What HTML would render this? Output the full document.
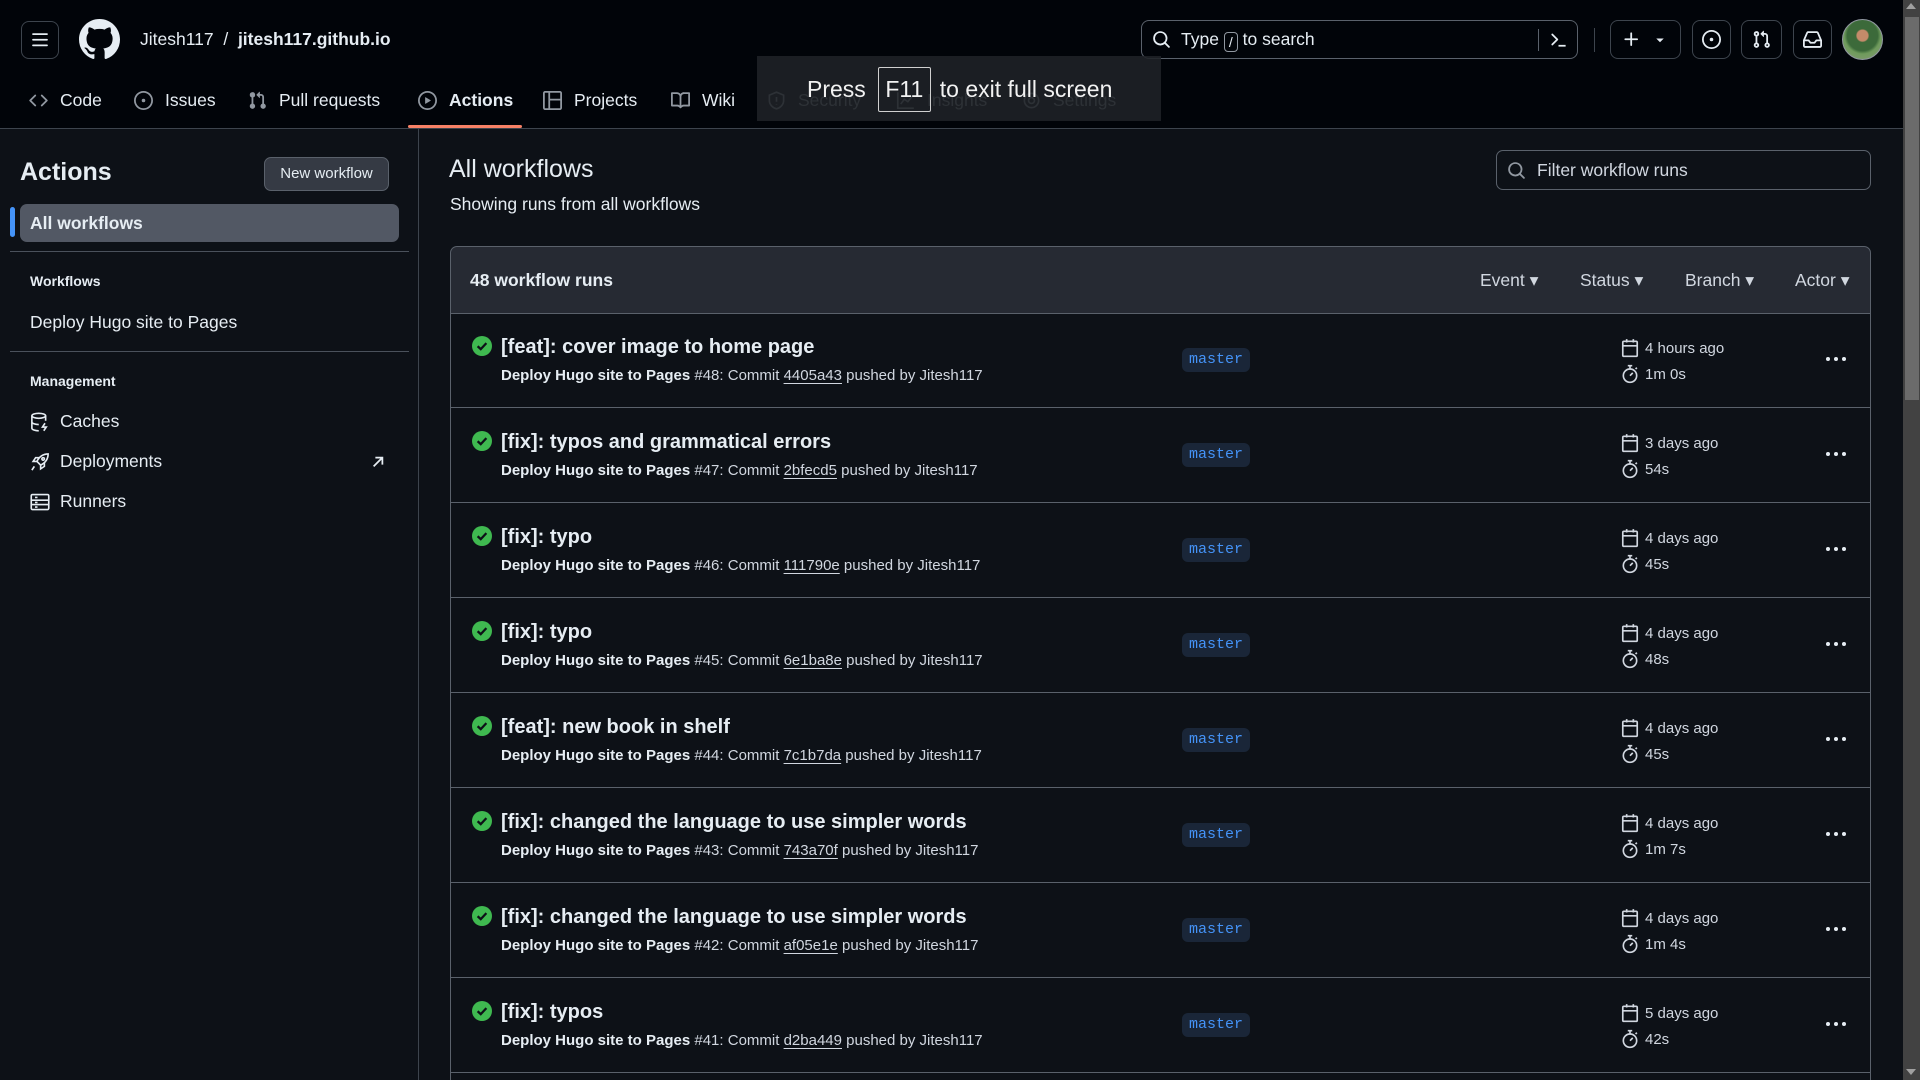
<!DOCTYPE html>
<html><head><meta charset="utf-8"><style>
*{box-sizing:border-box;margin:0;padding:0}
html,body{width:1920px;height:1080px;overflow:hidden}
body{background:#0d1117;font-family:"Liberation Sans",sans-serif;color:#e6edf3;font-size:17px}
#wrap{position:relative;width:1920px;height:1080px;overflow:hidden}
.a{position:absolute}
svg{display:block}
.hdr{left:0;top:0;width:1903px;height:129px;background:#010409;border-bottom:1px solid #3d444d}
.btn{border:1px solid #3d444d;border-radius:8px}
.tab{top:88px;height:24px;display:flex;align-items:center;font-size:17.5px;color:#e6edf3;white-space:nowrap}
.tab svg{margin-right:12px}
.sb{left:0;top:129px;width:419px;height:951px;border-right:1px solid #3d444d}
.row{left:450px;width:1421px;height:95px;border-bottom:1px solid #5a616b;border-left:1px solid #5a616b;border-right:1px solid #5a616b}
.t{left:50px;top:23px;font-size:20px;font-weight:bold;white-space:nowrap}
.s{left:50px;top:54px;font-size:15px;white-space:nowrap;color:#d1d7e0}
.s b{color:#e6edf3}
.s u{text-underline-offset:3px}
.chk{left:21px;top:23px}
.badge{left:731px;top:35px;height:24px;padding:0 7px;background:#1a2638;border-radius:6px;color:#4493f8;font-family:"Liberation Mono",monospace;font-size:15px;line-height:24px}
.tm{left:1170px;font-size:15px;color:#d1d7e0;display:flex;align-items:center;white-space:nowrap}
.tm svg{margin-right:6px}
.dots{left:1374px;top:43px}
</style></head><body><div id="wrap">
<div class="a hdr"></div>
<div class="a btn" style="left:21px;top:21px;width:38px;height:38px;display:flex;align-items:center;justify-content:center"><svg width="18" height="18" viewBox="0 0 16 16" fill="#e6edf3"><path d="M1 2.75A.75.75 0 0 1 1.750 2h12.5a.75.75 0 0 1 0 1.5H1.75A.75.75 0 0 1 1 2.75Zm0 5A.75.75 0 0 1 1.75 7h12.5a.75.75 0 0 1 0 1.5H1.75A.75.75 0 0 1 1 7.75ZM1.75 12h12.5a.75.75 0 0 1 0 1.5H1.75a.75.75 0 0 1 0-1.5Z"/></svg></div>
<svg class="a" style="left:79px;top:19px" width="41" height="41" viewBox="0 0 16 16" fill="#e6edf3"><path d="M8 0c4.42 0 8 3.58 8 8a8.013 8.013 0 0 1-5.45 7.59c-.4.08-.55-.17-.55-.38 0-.27.01-1.130.01-2.2 0-.75-.25-1.230-.54-1.48 1.780-.2 3.650-.88 3.650-3.950 0-.88-.31-1.590-.82-2.150.08-.2.36-1.020-.08-2.120 0 0-.67-.22-2.200.82-.64-.18-1.320-.27-2-.27-.68 0-1.360.09-2 .27-1.530-1.030-2.200-.82-2.200-.82-.44 1.100-.16 1.920-.08 2.120-.51.56-.82 1.280-.82 2.150 0 3.060 1.860 3.750 3.640 3.950-.23.2-.44.55-.51 1.070-.46.21-1.610.55-2.330-.66-.15-.24-.6-.83-1.230-.82-.67.01-.27.38.01.53.34.19.73.9.82 1.130.16.45.68 1.310 2.690.94 0 .67.01 1.3.01 1.490 0 .21-.15.45-.55.38A7.995 7.995 0 0 1 0 8c0-4.420 3.580-8 8-8Z"/></svg>
<div class="a" style="left:140px;top:29px;font-size:17.5px;white-space:nowrap">Jitesh117 &nbsp;/&nbsp; <b>jitesh117.github.io</b></div>

<div class="a btn" style="left:1141px;top:20px;width:437px;height:39px;border-color:#5a616b"></div>
<svg class="a" style="left:1152px;top:30px" width="19" height="19" viewBox="0 0 16 16" fill="#e6edf3"><path d="M10.68 11.74a6 6 0 0 1-7.922-8.982 6 6 0 0 1 8.982 7.922l3.04 3.04a.749.749 0 1 1-1.06 1.06ZM11.5 7a4.499 4.499 0 1 0-8.997 0A4.499 4.499 0 0 0 11.5 7Z"/></svg>
<div class="a" style="left:1181px;top:29px;font-size:17.5px;white-space:nowrap">Type <span style="display:inline-block;border:1px solid #9198a1;border-radius:4px;width:14px;height:20px;font-size:14px;text-align:center;line-height:18px;vertical-align:-2px">/</span> to search</div>
<div class="a" style="left:1538px;top:29px;width:1px;height:22px;background:#5a616b"></div>
<svg class="a" style="left:1549px;top:30px" width="19" height="19" viewBox="0 0 16 16" fill="#e6edf3"><path d="M2.22 3.22a.75.75 0 0 1 1.06 0l4.25 4.25a.75.75 0 0 1 0 1.06l-4.25 4.25a.75.75 0 0 1-1.06-1.06L5.94 8 2.22 4.28a.75.75 0 0 1 0-1.06ZM8 12.5h6v1.5H8Z"/></svg>
<div class="a" style="left:1594px;top:28px;width:1px;height:24px;background:#3d444d"></div>
<div class="a btn" style="left:1610px;top:20px;width:71px;height:39px"></div>
<svg class="a" style="left:1622px;top:30px" width="19" height="19" viewBox="0 0 16 16" fill="#e6edf3"><path d="M7.75 2a.75.75 0 0 1 .75.75V7h4.25a.75.75 0 0 1 0 1.5H8.5v4.25a.75.75 0 0 1-1.5 0V8.5H2.75a.75.75 0 0 1 0-1.5H7V2.75A.75.75 0 0 1 7.75 2Z"/></svg>
<svg class="a" style="left:1654px;top:34px" width="12" height="12" viewBox="0 0 16 16" fill="#e6edf3"><path d="m3 6 5 5 5-5Z"/></svg>
<div class="a btn" style="left:1692px;top:20px;width:39px;height:39px"></div>
<svg class="a" style="left:1702px;top:30px" width="19" height="19" viewBox="0 0 16 16" fill="#e6edf3"><path d="M8 9.5a1.5 1.5 0 1 0 0-3 1.5 1.5 0 0 0 0 3Z"/><path d="M8 0a8 8 0 1 1 0 16A8 8 0 0 1 8 0ZM1.5 8a6.5 6.5 0 1 0 13 0 6.5 6.5 0 0 0-13 0Z"/></svg>
<div class="a btn" style="left:1741px;top:20px;width:41px;height:39px"></div>
<svg class="a" style="left:1752px;top:30px" width="19" height="19" viewBox="0 0 16 16" fill="#e6edf3"><path d="M1.5 3.25a2.25 2.25 0 1 1 3 2.122v5.256a2.251 2.251 0 1 1-1.5 0V5.372A2.25 2.25 0 0 1 1.5 3.25Zm5.677-.177L9.573.677A.25.25 0 0 1 10 .854V2.5h1A2.5 2.5 0 0 1 13.5 5v5.628a2.251 2.251 0 1 1-1.5 0V5a1 1 0 0 0-1-1h-1v1.646a.25.25 0 0 1-.427.177L7.177 3.427a.25.25 0 0 1 0-.354ZM3.75 2.5a.75.75 0 1 0 0 1.5.75.75 0 0 0 0-1.5Zm0 9.5a.75.75 0 1 0 0 1.5.75.75 0 0 0 0-1.5Zm8.25.75a.75.75 0 1 0 1.5 0 .75.75 0 0 0-1.5 0Z"/></svg>
<div class="a btn" style="left:1793px;top:20px;width:39px;height:39px"></div>
<svg class="a" style="left:1803px;top:30px" width="19" height="19" viewBox="0 0 16 16" fill="#e6edf3"><path d="M2.8 2.06A1.75 1.75 0 0 1 4.41 1h7.18c.7 0 1.333.417 1.61 1.06l2.74 6.395c.04.093.06.194.06.295v4.5A1.75 1.75 0 0 1 14.25 15H1.75A1.75 1.75 0 0 1 0 13.25v-4.5c0-.101.02-.202.06-.295Zm1.61.44a.25.25 0 0 0-.23.152L1.887 8H4.75a.75.75 0 0 1 .6.3L6.625 10h2.75l1.275-1.7a.75.75 0 0 1 .6-.3h2.863L11.82 2.652a.25.25 0 0 0-.23-.152Zm10.09 7h-2.875l-1.275 1.7a.75.75 0 0 1-.6.3h-3.5a.75.75 0 0 1-.6-.3L4.375 9.5H1.5v3.75c0 .138.112.25.25.25h12.5a.25.25 0 0 0 .25-.25Z"/></svg>
<div class="a" style="left:1842px;top:19px;width:41px;height:41px;border-radius:50%;background:radial-gradient(circle at 50% 40%,#c48b6a 0 18%,#3c6a3a 22% 50%,#6f9b5c 60%,#8a9a7a 100%);border:1px solid #9198a1"></div>

<div class="a tab" style="left:29px"><svg width="19" height="19" viewBox="0 0 16 16" fill="#9198a1"><path d="m11.28 3.22 4.25 4.25a.75.75 0 0 1 0 1.06l-4.25 4.25a.749.749 0 0 1-1.275-.326.749.749 0 0 1 .215-.734L13.94 8l-3.72-3.72a.749.749 0 0 1 .326-1.275.749.749 0 0 1 .734.215Zm-6.56 0a.751.751 0 0 1 1.042.018.751.751 0 0 1 .018 1.042L2.06 8l3.72 3.72a.749.749 0 0 1-.326 1.275.749.749 0 0 1-.734-.215L.47 8.53a.75.75 0 0 1 0-1.06Z"/></svg>Code</div>
<div class="a tab" style="left:134px"><svg width="19" height="19" viewBox="0 0 16 16" fill="#9198a1"><path d="M8 9.5a1.5 1.5 0 1 0 0-3 1.5 1.5 0 0 0 0 3Z"/><path d="M8 0a8 8 0 1 1 0 16A8 8 0 0 1 8 0ZM1.5 8a6.5 6.5 0 1 0 13 0 6.5 6.5 0 0 0-13 0Z"/></svg>Issues</div>
<div class="a tab" style="left:248px"><svg width="19" height="19" viewBox="0 0 16 16" fill="#9198a1"><path d="M1.5 3.25a2.25 2.25 0 1 1 3 2.122v5.256a2.251 2.251 0 1 1-1.5 0V5.372A2.25 2.25 0 0 1 1.5 3.25Zm5.677-.177L9.573.677A.25.25 0 0 1 10 .854V2.5h1A2.5 2.5 0 0 1 13.5 5v5.628a2.251 2.251 0 1 1-1.5 0V5a1 1 0 0 0-1-1h-1v1.646a.25.25 0 0 1-.427.177L7.177 3.427a.25.25 0 0 1 0-.354Z"/></svg>Pull requests</div>
<div class="a tab" style="left:418px;font-weight:bold"><svg width="19" height="19" viewBox="0 0 16 16" fill="#9198a1"><path d="M8 0a8 8 0 1 1 0 16A8 8 0 0 1 8 0ZM1.5 8a6.5 6.5 0 1 0 13 0 6.5 6.5 0 0 0-13 0Zm4.879-2.773 4.264 2.559a.25.25 0 0 1 0 .428l-4.264 2.559A.25.25 0 0 1 6 10.559V5.442a.25.25 0 0 1 .379-.215Z"/></svg>Actions</div>
<div class="a" style="left:408px;top:125px;width:114px;height:3px;background:#f78166;border-radius:2px"></div>
<div class="a tab" style="left:543px"><svg width="19" height="19" viewBox="0 0 16 16" fill="#9198a1"><path d="M1.75 0h12.5C15.216 0 16 .784 16 1.75v12.5A1.75 1.75 0 0 1 14.25 16H1.75A1.75 1.75 0 0 1 0 14.25V1.75C0 .784.784 0 1.75 0ZM1.5 1.75v12.5c0 .138.112.25.25.25H4.5V1.5H1.75a.25.25 0 0 0-.25.25ZM6 1.5v5h8.5V1.75a.25.25 0 0 0-.25-.25Zm8.5 6.5H6v6.5h8.25a.25.25 0 0 0 .25-.25Z"/></svg>Projects</div>
<div class="a tab" style="left:671px"><svg width="19" height="19" viewBox="0 0 16 16" fill="#9198a1"><path d="M0 1.75A.75.75 0 0 1 .75 1h4.253c1.227 0 2.317.59 3 1.501A3.743 3.743 0 0 1 11.006 1h4.245a.75.75 0 0 1 .75.75v10.5a.75.75 0 0 1-.75.75h-4.507a2.25 2.25 0 0 0-1.591.659l-.622.621a.75.75 0 0 1-1.06 0l-.622-.621A2.25 2.25 0 0 0 5.258 13H.75a.75.75 0 0 1-.75-.75Zm7.251 10.324.004-5.073-.002-2.253A2.25 2.25 0 0 0 5.003 2.5H1.5v9h3.757a3.75 3.75 0 0 1 1.994.574ZM8.755 4.75l-.004 7.322a3.752 3.752 0 0 1 1.992-.572H14.5v-9h-3.495a2.25 2.25 0 0 0-2.25 2.25Z"/></svg>Wiki</div>
<div class="a tab" style="left:767px;color:#9198a1"><svg width="19" height="19" viewBox="0 0 16 16" fill="none" stroke="#9198a1" stroke-width="1.4"><path d="M8 1 2 3.5V8c0 3.5 2.6 6 6 7 3.4-1 6-3.5 6-7V3.5Z"/><path d="M8 5v4M8 11v.5"/></svg>Security</div>
<div class="a tab" style="left:896px;color:#9198a1"><svg width="19" height="19" viewBox="0 0 16 16" fill="none" stroke="#9198a1" stroke-width="1.4"><path d="M1.5 1v13.5H15M4 11l3-4 3 2 4-5"/></svg>Insights</div>
<div class="a tab" style="left:1022px;color:#9198a1"><svg width="19" height="19" viewBox="0 0 16 16" fill="none" stroke="#9198a1" stroke-width="1.4"><circle cx="8" cy="8" r="2.5"/><circle cx="8" cy="8" r="6"/></svg>Settings</div>
<div class="a" style="left:757px;top:56px;width:404px;height:65px;background:rgba(31,34,39,0.88)"></div>
<div class="a" style="left:807px;top:66px;height:46px;display:flex;align-items:center;font-size:23px;color:#f2f2f2;white-space:nowrap">Press<span style="display:inline-block;border:1px solid #d0d0d0;border-radius:2px;width:53px;height:45px;margin:0 9px 0 12px;line-height:43px;text-align:center">F11</span>to exit full screen</div>

<div class="a sb"></div>
<div class="a" style="left:20px;top:158px;font-size:25px;font-weight:bold">Actions</div>
<div class="a" style="left:264px;top:157px;width:125px;height:34px;background:#353a44;border:1px solid #5a616b;border-radius:7px;font-size:15px;text-align:center;line-height:32px">New workflow</div>
<div class="a" style="left:10px;top:207px;width:5px;height:30px;background:#4493f8;border-radius:3px"></div>
<div class="a" style="left:20px;top:204px;width:379px;height:38px;background:#525864;border-radius:7px;font-size:17.5px;font-weight:bold;line-height:38px;padding-left:10px">All workflows</div>
<div class="a" style="left:10px;top:251px;width:399px;height:1px;background:#4a515b"></div>
<div class="a" style="left:30px;top:273px;font-size:14px;font-weight:bold">Workflows</div>
<div class="a" style="left:30px;top:312px;font-size:17.5px">Deploy Hugo site to Pages</div>
<div class="a" style="left:10px;top:351px;width:399px;height:1px;background:#4a515b"></div>
<div class="a" style="left:30px;top:373px;font-size:14px;font-weight:bold">Management</div>
<svg class="a" style="left:30px;top:412px" width="20" height="20" viewBox="0 0 16 16" fill="none" stroke="#e6edf3" stroke-width="1.3"><ellipse cx="7" cy="3" rx="5.5" ry="2"/><path d="M1.5 3v10c0 1.1 2.5 2 5.5 2M12.5 3v4M1.5 8c0 1.1 2.5 2 5.5 2"/><path d="M12 9l-2 3h3l-2 3" fill="none"/></svg>
<div class="a" style="left:60px;top:411px;font-size:17.5px">Caches</div>
<svg class="a" style="left:30px;top:452px" width="20" height="20" viewBox="0 0 16 16" fill="none" stroke="#e6edf3" stroke-width="1.3"><path d="M14.5 1.5c-4 0-7 2-9 6l3 3c4-2 6-5 6-9Z"/><circle cx="10.5" cy="5.5" r="1"/><path d="M5.5 7.5H2.5l2-3h3M8.5 10.5v3l3-2v-3M3.5 11.5l-2 3"/></svg>
<div class="a" style="left:60px;top:451px;font-size:17.5px">Deployments</div>
<svg class="a" style="left:371px;top:455px" width="14" height="14" viewBox="0 0 16 16" fill="none" stroke="#e6edf3" stroke-width="2"><path d="M3 13 13 3M5 3h8v8"/></svg>
<svg class="a" style="left:30px;top:492px" width="20" height="20" viewBox="0 0 16 16" fill="none" stroke="#e6edf3" stroke-width="1.3"><rect x="1" y="2" width="14" height="12" rx="1"/><path d="M1 6.5h14M1 10h14M4 4.3h2M4 8.3h2M4 12h2"/></svg>
<div class="a" style="left:60px;top:491px;font-size:17.5px">Runners</div>

<div class="a" style="left:449px;top:155px;font-size:25px">All workflows</div>
<div class="a" style="left:450px;top:194px;font-size:17.5px">Showing runs from all workflows</div>
<div class="a" style="left:1496px;top:150px;width:375px;height:40px;border:1px solid #5a616b;border-radius:7px"></div>
<svg class="a" style="left:1507px;top:161px" width="19" height="19" viewBox="0 0 16 16" fill="#9198a1"><path d="M10.68 11.74a6 6 0 0 1-7.922-8.982 6 6 0 0 1 8.982 7.922l3.04 3.04a.749.749 0 1 1-1.06 1.06ZM11.5 7a4.499 4.499 0 1 0-8.997 0A4.499 4.499 0 0 0 11.5 7Z"/></svg>
<div class="a" style="left:1537px;top:160px;font-size:17.5px;color:#d1d7e0">Filter workflow runs</div>

<div class="a" style="left:450px;top:246px;width:1421px;height:68px;background:#262a33;border:1px solid #5a616b;border-radius:7px 7px 0 0"></div>
<div class="a" style="left:470px;top:270px;font-size:17.5px;font-weight:bold">48 workflow runs</div>
<div class="a" style="left:1480px;top:270px;font-size:17.5px;color:#d1d7e0;white-space:nowrap">Event ▾</div>
<div class="a" style="left:1580px;top:270px;font-size:17.5px;color:#d1d7e0;white-space:nowrap">Status ▾</div>
<div class="a" style="left:1685px;top:270px;font-size:17.5px;color:#d1d7e0;white-space:nowrap">Branch ▾</div>
<div class="a" style="left:1795px;top:270px;font-size:17.5px;color:#d1d7e0;white-space:nowrap">Actor ▾</div>

<div id="rows"></div>
<div class="a" style="left:1903px;top:0;width:17px;height:1080px;background:#424242"></div>
<div class="a" style="left:1905px;top:17px;width:14px;height:383px;background:#6b6b6b"></div>
<div class="a" style="left:1906px;top:3px;width:0;height:0;border-left:5px solid transparent;border-right:5px solid transparent;border-bottom:6px solid #a0a0a0"></div>
<div class="a" style="left:1906px;top:1069px;width:0;height:0;border-left:5px solid transparent;border-right:5px solid transparent;border-top:6px solid #a0a0a0"></div>
</div>
<script>
var d=[["[feat]: cover image to home page",48,"4405a43","4 hours ago","1m 0s"],
["[fix]: typos and grammatical errors",47,"2bfecd5","3 days ago","54s"],
["[fix]: typo",46,"111790e","4 days ago","45s"],
["[fix]: typo",45,"6e1ba8e","4 days ago","48s"],
["[feat]: new book in shelf",44,"7c1b7da","4 days ago","45s"],
["[fix]: changed the language to use simpler words",43,"743a70f","4 days ago","1m 7s"],
["[fix]: changed the language to use simpler words",42,"af05e1e","4 days ago","1m 4s"],
["[fix]: typos",41,"d2ba449","5 days ago","42s"]];
var h="";
d.forEach(function(r,i){var top=313+i*95;
h+='<div class="a row" style="top:'+top+'px">'+
'<svg class="a chk" width="20" height="20" viewBox="0 0 16 16"><circle cx="8" cy="8" r="8" fill="#3fb950"/><path d="M4.5 8.2 7 10.5l4.5-4.8" stroke="#0d1117" stroke-width="1.8" fill="none"/></svg>'+
'<div class="a t">'+r[0]+'</div>'+
'<div class="a s"><b>Deploy Hugo site to Pages</b> #'+r[1]+': Commit <u>'+r[2]+'</u> pushed by Jitesh117</div>'+
'<div class="a badge">master</div>'+
'<div class="a tm" style="top:25px"><svg width="18" height="20" viewBox="0 0 16 18" fill="none" stroke="#d1d7e0" stroke-width="1.5"><rect x="1.5" y="3" width="13" height="13.5" rx="1"/><path d="M1.5 7h13M5 1v3M11 1v3"/></svg>'+r[3]+'</div>'+
'<div class="a tm" style="top:51px"><svg width="18" height="20" viewBox="0 0 16 18" fill="none" stroke="#d1d7e0" stroke-width="1.5"><circle cx="8" cy="10.5" r="6"/><path d="M6 1.5h4M8 1.5v3M8 10.5l2.5-2.5M13 4.5l1.2-1.2"/></svg>'+r[4]+'</div>'+
'<svg class="a dots" width="22" height="6" viewBox="0 0 22 6" fill="#e6edf3"><circle cx="3" cy="3" r="2"/><circle cx="11" cy="3" r="2"/><circle cx="19" cy="3" r="2"/></svg>'+
'</div>';});
h+='<div class="a" style="left:450px;top:1073px;width:1421px;height:7px;border-left:1px solid #5a616b;border-right:1px solid #5a616b"></div>';
document.getElementById("rows").innerHTML=h;
</script>
</body></html>
